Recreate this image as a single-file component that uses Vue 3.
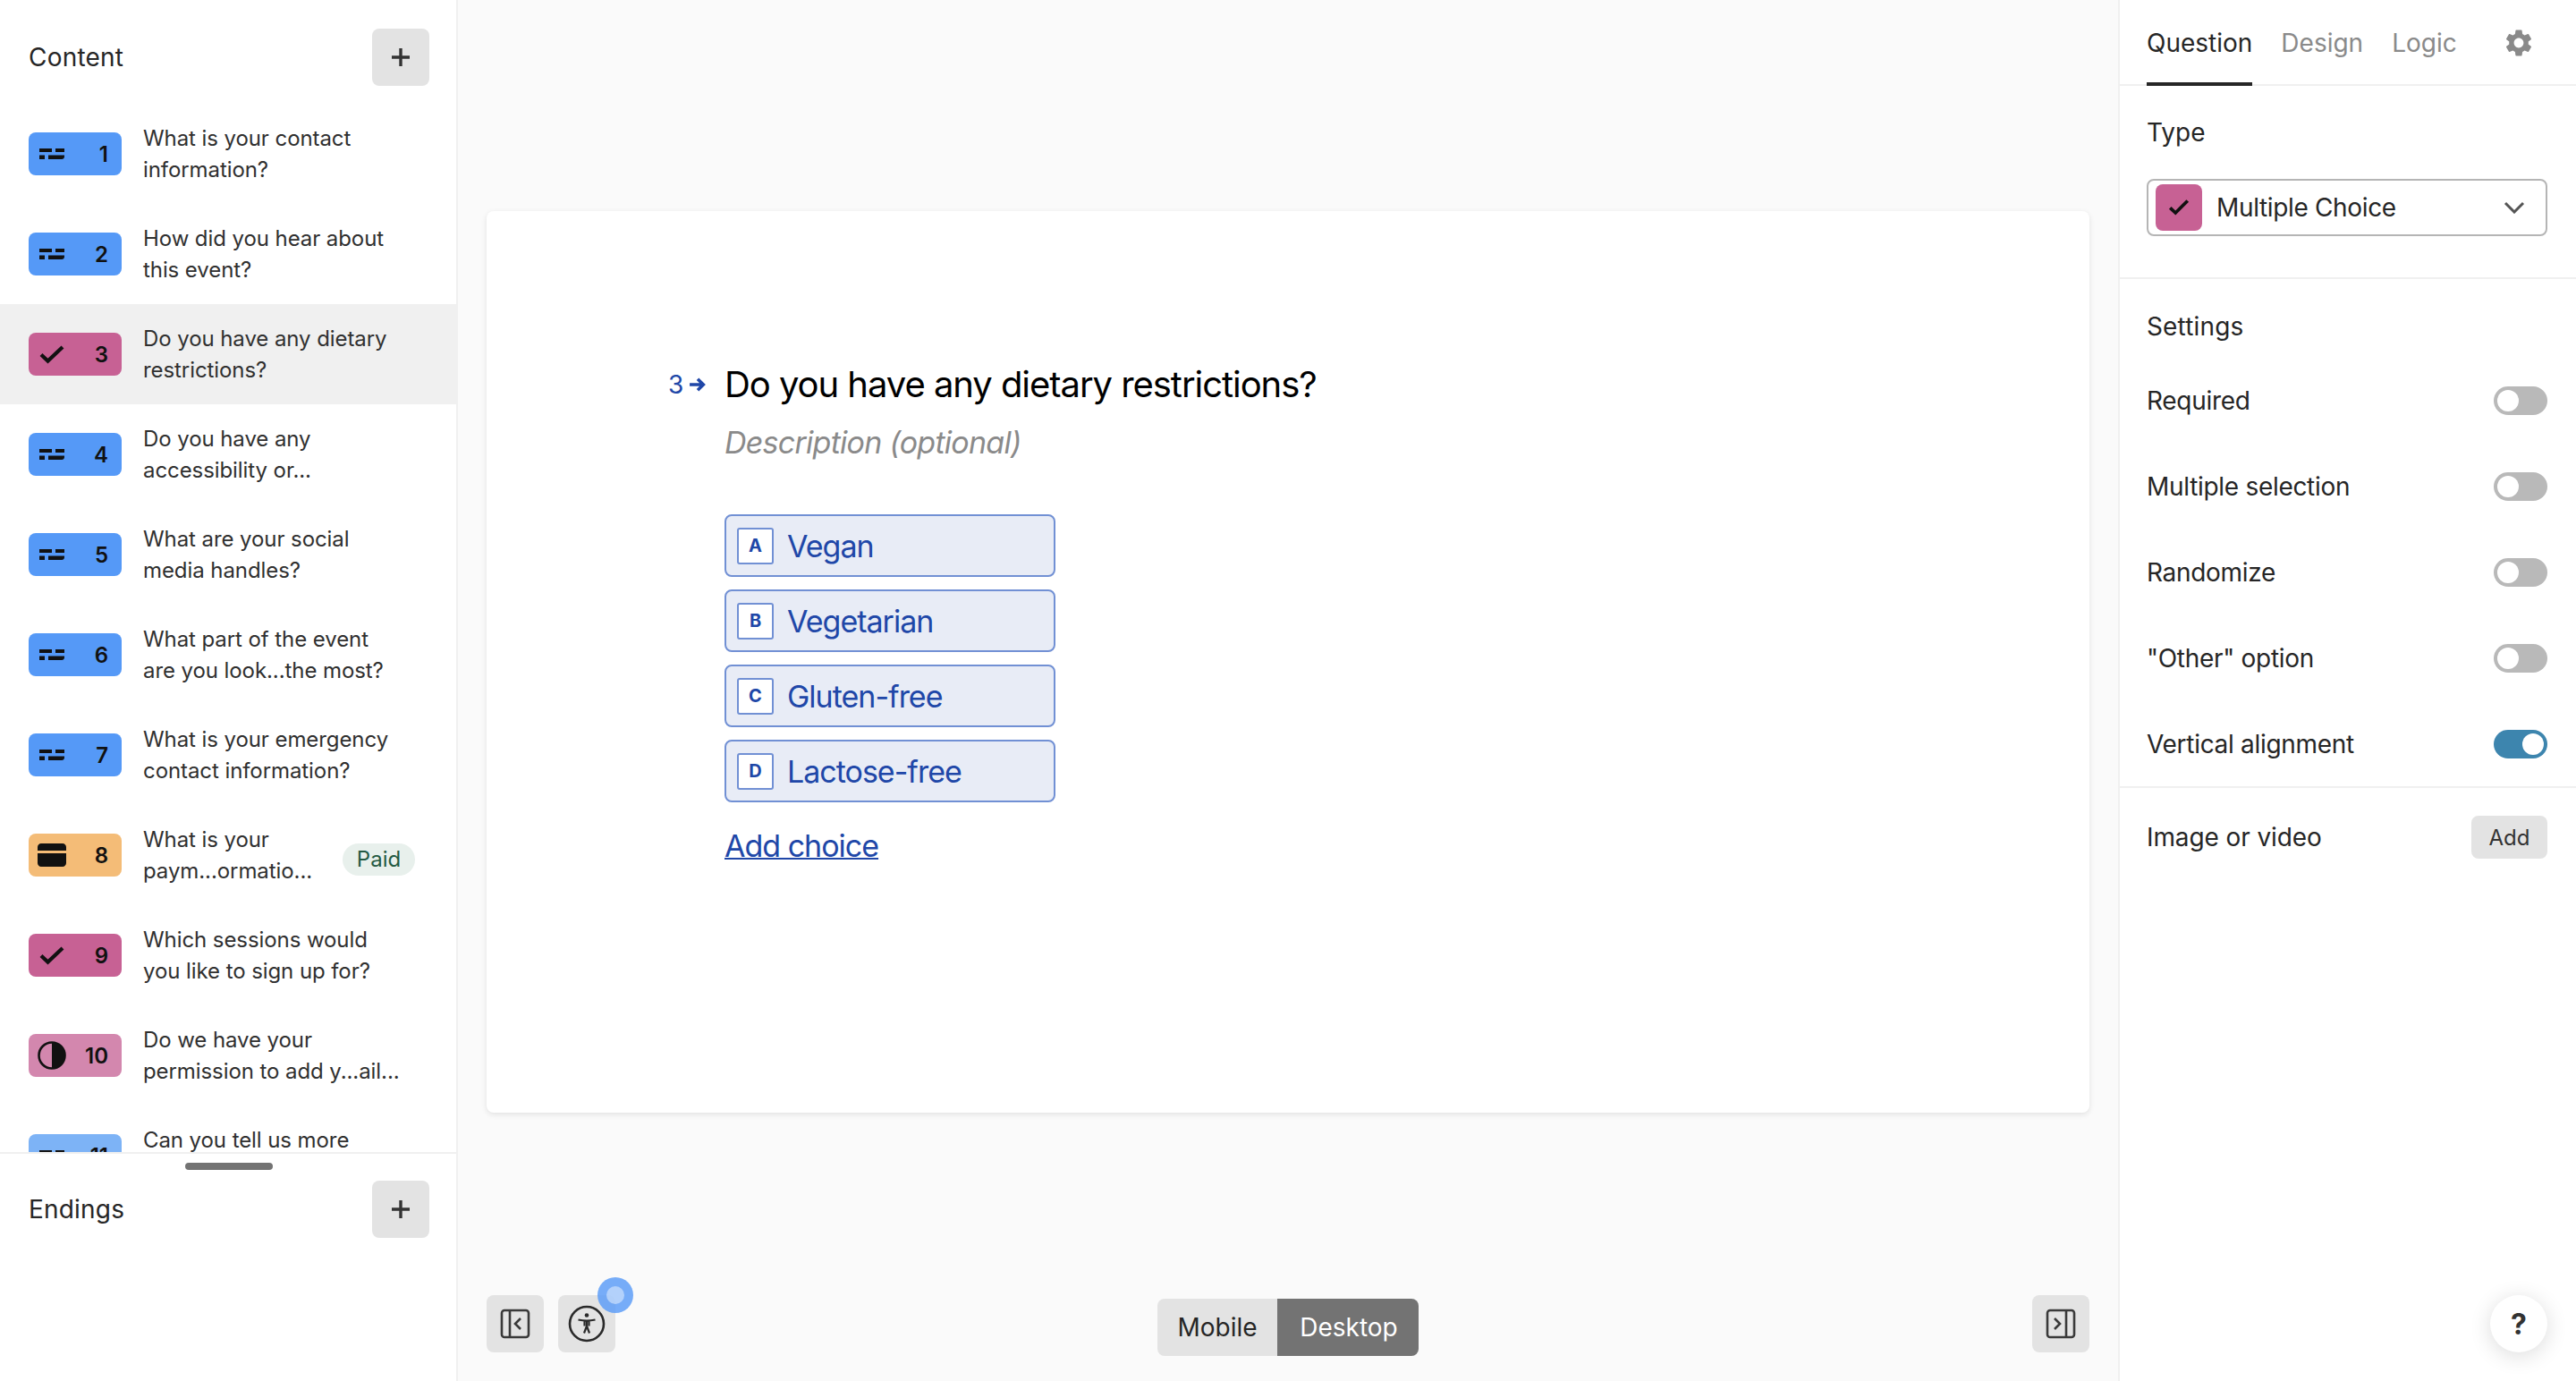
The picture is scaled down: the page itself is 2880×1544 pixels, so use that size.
<script setup>
const questions = [
  { n: 1, kind: 'short', color: '#5599f7', lines: ['What is your contact', 'information?'] },
  { n: 2, kind: 'short', color: '#5599f7', lines: ['How did you hear about', 'this event?'] },
  { n: 3, kind: 'check', color: '#c76194', lines: ['Do you have any dietary', 'restrictions?'], active: true },
  { n: 4, kind: 'short', color: '#5599f7', lines: ['Do you have any', 'accessibility or...'] },
  { n: 5, kind: 'short', color: '#5599f7', lines: ['What are your social', 'media handles?'] },
  { n: 6, kind: 'short', color: '#5599f7', lines: ['What part of the event', 'are you look...the most?'] },
  { n: 7, kind: 'short', color: '#5599f7', lines: ['What is your emergency', 'contact information?'] },
  { n: 8, kind: 'card', color: '#f4bc77', lines: ['What is your', 'paym...ormatio...'], paid: true },
  { n: 9, kind: 'check', color: '#c76194', lines: ['Which sessions would', 'you like to sign up for?'] },
  { n: 10, kind: 'half', color: '#d387ae', lines: ['Do we have your', 'permission to add y...ail...'] },
  { n: 11, kind: 'short', color: '#7db3f6', lines: ['Can you tell us more', 'about any...'] },
]
const choices = [
  { k: 'A', t: 'Vegan' },
  { k: 'B', t: 'Vegetarian' },
  { k: 'C', t: 'Gluten-free' },
  { k: 'D', t: 'Lactose-free' },
]
const settings = [
  { t: 'Required', on: false },
  { t: 'Multiple selection', on: false },
  { t: 'Randomize', on: false },
  { t: '"Other" option', on: false },
  { t: 'Vertical alignment', on: true },
]
</script>

<template>
  <div class="app">
    <aside class="left">
      <div class="head">
        <span class="head-title">Content</span>
        <button class="square">
          <svg width="20" height="20" viewBox="0 0 20 20"><path d="M10 0v20M0 10h20" stroke="#333" stroke-width="3.4" fill="none"/></svg>
        </button>
      </div>
      <div class="list">
        <div v-for="q in questions" :key="q.n" class="item" :class="{ active: q.active }">
          <div class="badge" :style="{ background: q.color }">
            <svg v-if="q.kind === 'short'" class="bi" width="32" height="32" viewBox="0 0 32 32">
              <path fill="#111" d="M2 10h14v4H2zM20 10h10v4H20zM2 17.500h6v4.500H2zM12 17.500h18v1.500c0 1.700-1.300 3-3 3H12z"/>
            </svg>
            <svg v-else-if="q.kind === 'check'" class="bi" width="32" height="32" viewBox="0 0 32 32">
              <path fill="none" stroke="#111" stroke-width="4.200" d="M4 16.500l7.500 7L28 8"/>
            </svg>
            <svg v-else-if="q.kind === 'card'" class="bi" width="32" height="32" viewBox="0 0 32 32">
              <path fill="#111" d="M0 7c0-2.200 1.800-4 4-4h24c2.200 0 4 1.800 4 4v4H0zM0 14h32v11c0 2.200-1.800 4-4 4H4c-2.200 0-4-1.800-4-4z"/>
            </svg>
            <svg v-else class="bi" width="32" height="32" viewBox="0 0 32 32">
              <circle cx="16" cy="16" r="14.500" fill="none" stroke="#111" stroke-width="2.600"/>
              <path fill="#111" d="M16 1.500a14.500 14.500 0 0 1 0 29z"/>
            </svg>
            <span class="num">{{ q.n }}</span>
          </div>
          <div class="qtext"><span v-for="l in q.lines" :key="l">{{ l }}</span></div>
          <span v-if="q.paid" class="paid">Paid</span>
        </div>
      </div>
      <div class="thumbtrack"><div class="thumb"></div></div>
      <div class="head endings">
        <span class="head-title">Endings</span>
        <button class="square">
          <svg width="20" height="20" viewBox="0 0 20 20"><path d="M10 0v20M0 10h20" stroke="#333" stroke-width="3.4" fill="none"/></svg>
        </button>
      </div>
    </aside>

    <main class="center">
      <section class="card">
        <div class="question">
          <div class="qnum">
            <span>3</span>
            <svg width="19" height="18" viewBox="0 0 18 16"><path d="M1 8h14M9.500 2l6 6-6 6" fill="none" stroke="#2047a8" stroke-width="3.400"/></svg>
          </div>
          <div class="qbody">
            <h1 class="qtitle">Do you have any dietary restrictions?</h1>
            <p class="qdesc">Description (optional)</p>
            <div class="choices">
              <div v-for="c in choices" :key="c.k" class="choice">
                <span class="key">{{ c.k }}</span>
                <span class="ctext">{{ c.t }}</span>
              </div>
            </div>
            <a class="addchoice">Add choice</a>
          </div>
        </div>
      </section>
      <div class="bottom">
        <div class="bleft">
          <button class="square">
            <svg width="34" height="34" viewBox="0 0 34 34" fill="none" stroke="#3a3a3a" stroke-width="2.600">
              <rect x="2" y="2" width="30" height="30" rx="3"/><path d="M11 2v30M23 11l-6 6 6 6"/>
            </svg>
          </button>
          <div class="a11y-wrap">
            <button class="square">
              <svg width="42" height="42" viewBox="0 0 42 42">
                <circle cx="21" cy="21" r="19" fill="none" stroke="#2a2a2a" stroke-width="2.600"/>
                <circle cx="21" cy="11.500" r="2.300" fill="#2a2a2a"/>
                <path d="M11.500 16.500c6 1.300 13 1.300 19 0M21 17.500v7M21 23.500l-3 8M21 23.500l3 8M18.500 17.500l0 6M23.500 17.500l0 6" fill="none" stroke="#2a2a2a" stroke-width="2.200"/>
              </svg>
            </button>
            <span class="pulse"><span class="pulse-in"></span></span>
          </div>
        </div>
        <div class="segment">
          <span class="seg">Mobile</span>
          <span class="seg on">Desktop</span>
        </div>
        <div class="bright">
          <button class="square">
            <svg width="34" height="34" viewBox="0 0 34 34" fill="none" stroke="#3a3a3a" stroke-width="2.600">
              <rect x="2" y="2" width="30" height="30" rx="3"/><path d="M23 2v30M10 11l6 6-6 6"/>
            </svg>
          </button>
        </div>
      </div>
    </main>

    <aside class="right">
      <nav class="tabs">
        <span class="tab on">Question</span>
        <span class="tab">Design</span>
        <span class="tab">Logic</span>
        <svg class="gear" width="30" height="30" viewBox="2 2 20 20">
          <path fill="#8a8a8a" d="M19.140 12.940c.04-.3.06-.61.06-.94 0-.32-.02-.64-.07-.94l2.030-1.580c.18-.14.23-.41.12-.61l-1.920-3.320c-.12-.22-.37-.29-.59-.22l-2.390.96c-.5-.38-1.030-.7-1.620-.94l-.36-2.540c-.04-.24-.24-.41-.48-.41h-3.840c-.24 0-.43.17-.47.41l-.36 2.540c-.59.24-1.130.57-1.620.94l-2.390-.96c-.22-.08-.47 0-.59.22L2.740 8.870c-.12.21-.08.47.12.61l2.030 1.580c-.05.3-.09.63-.09.94s.02.64.07.94l-2.030 1.580c-.18.14-.23.41-.12.61l1.920 3.320c.12.22.37.29.59.22l2.390-.96c.5.38 1.030.7 1.620.94l.36 2.540c.05.24.24.41.48.41h3.840c.24 0 .44-.17.47-.41l.36-2.540c.59-.24 1.130-.56 1.620-.94l2.390.96c.22.08.47 0 .59-.22l1.920-3.320c.12-.22.07-.47-.12-.61l-2.010-1.580zM12 15.600c-1.980 0-3.600-1.620-3.600-3.600s1.620-3.600 3.600-3.600 3.600 1.620 3.600 3.600-1.620 3.600-3.600 3.600z"/>
        </svg>
      </nav>
      <section class="typesec">
        <div class="label">Type</div>
        <div class="select">
          <span class="sicon">
            <svg width="28" height="24" viewBox="0 0 32 32"><path fill="none" stroke="#111" stroke-width="5" d="M3 16.500l8 7.500L29 6"/></svg>
          </span>
          <span class="stext">Multiple Choice</span>
          <svg class="chev" width="24" height="14" viewBox="0 0 24 14"><path d="M2 2l10 10L22 2" fill="none" stroke="#555" stroke-width="3"/></svg>
        </div>
      </section>
      <section class="setsec">
        <div class="label settings-label">Settings</div>
        <div v-for="s in settings" :key="s.t" class="row">
          <span class="rowlabel">{{ s.t }}</span>
          <span class="toggle" :class="{ on: s.on }"><span class="knob"></span></span>
        </div>
      </section>
      <section class="media">
        <span class="rowlabel media-label">Image or video</span>
        <button class="addbtn">Add</button>
      </section>
      <button class="help">?</button>
    </aside>
  </div>
</template>

<style scoped>
.app {
  display: flex;
  width: 2880px;
  height: 1544px;
  overflow: hidden;
  background: #fff;
  color: #262626;
  font-family: Inter, "Noto Sans", sans-serif;
}
button {
  font-family: inherit;
  border: 0;
  padding: 0;
}
.left {
  width: 512px;
  flex: none;
  display: flex;
  flex-direction: column;
  border-right: 2px solid #f0f0f0;
  box-sizing: border-box;
}
.head {
  height: 116px;
  flex: none;
  display: flex;
  align-items: flex-start;
  justify-content: space-between;
  padding: 32px 30px 0 32px;
  box-sizing: border-box;
}
.head-title {
  font-size: 28px;
  line-height: 64px;
  letter-spacing: 0.2px;
}
.square {
  width: 64px;
  height: 64px;
  border-radius: 8px;
  background: #e3e3e3;
  display: flex;
  align-items: center;
  justify-content: center;
}
.list {
  height: 1172px;
  flex: none;
  overflow: hidden;
  border-bottom: 2px solid #f0f0f0;
  box-sizing: content-box;
}
.item {
  height: 112px;
  display: flex;
  align-items: center;
  padding: 0 14px 0 32px;
  box-sizing: border-box;
}
.item.active {
  background: #f0f0f0;
}
.badge {
  width: 104px;
  height: 48px;
  flex: none;
  border-radius: 8px;
  display: flex;
  align-items: center;
  justify-content: space-between;
  padding: 0 15px 0 10px;
  box-sizing: border-box;
}
.num {
  font-size: 24px;
  font-weight: 600;
  color: #111;
}
.qtext {
  margin-left: 24px;
  font-size: 24px;
  line-height: 35.500px;
  letter-spacing: -0.08px;
  flex: 1;
  white-space: nowrap;
  color: #303030;
}
.qtext span {
  display: block;
}
.paid {
  flex: none;
  width: 81px;
  height: 36px;
  border-radius: 18px;
  background: #e8f0ec;
  color: #245a43;
  font-size: 24px;
  line-height: 36px;
  text-align: center;
  margin: 9px 32px 0 0;
}
.thumbtrack {
  height: 30px;
  flex: none;
  padding-top: 10px;
  box-sizing: border-box;
}
.thumb {
  width: 98px;
  height: 8px;
  margin-left: 207px;
  border-radius: 4px;
  background: #737373;
}
.endings {
  height: auto;
  padding-top: 0;
}
.center {
  flex: 1;
  min-width: 0;
  background: #fafafa;
  display: flex;
  flex-direction: column;
  padding: 236px 32px 28px;
  box-sizing: border-box;
}
.card {
  height: 1008px;
  flex: none;
  background: #fff;
  border-radius: 8px;
  box-shadow: 0 2px 6px rgba(0, 0, 0, 0.1);
  padding: 168px 0 0 203px;
  box-sizing: border-box;
}
.question {
  display: flex;
}
.qnum {
  width: 63px;
  flex: none;
  display: flex;
  gap: 6px;
  align-items: center;
  height: 52px;
  align-self: flex-start;
  color: #2047a8;
  font-size: 28px;
}
.qbody {
  flex: 1;
}
.qtitle {
  margin: 0;
  font-size: 40px;
  font-weight: 400;
  line-height: 52px;
  letter-spacing: -1.05px;
  color: #000;
}
.qdesc {
  margin: 14px 0 0;
  font-size: 34px;
  line-height: 50px;
  letter-spacing: -0.75px;
  font-style: italic;
  color: #8a8a8a;
}
.choices {
  margin-top: 55px;
  display: flex;
  flex-direction: column;
  gap: 14px;
}
.choice {
  width: 370px;
  height: 70px;
  box-sizing: border-box;
  border: 2px solid #7190d4;
  border-radius: 8px;
  background: #e8ecf6;
  display: flex;
  align-items: center;
  padding-left: 12px;
  color: #2047a8;
}
.key {
  width: 41px;
  height: 41px;
  box-sizing: border-box;
  border: 2px solid #7190d4;
  border-radius: 3px;
  background: #fff;
  display: flex;
  align-items: center;
  justify-content: center;
  font-size: 20px;
  font-weight: 700;
}
.ctext {
  margin-left: 15px;
  font-size: 34px;
  letter-spacing: -1px;
}
.addchoice {
  display: block;
  width: max-content;
  margin-top: 24px;
  font-size: 34px;
  line-height: 50px;
  letter-spacing: -1px;
  color: #2047a8;
  text-decoration: underline;
  text-decoration-thickness: 2px;
}
.bottom {
  margin-top: auto;
  display: grid;
  grid-template-columns: 1fr auto 1fr;
  align-items: start;
}
.bleft {
  display: flex;
  gap: 16px;
}
.a11y-wrap {
  position: relative;
}
.pulse {
  position: absolute;
  left: 44px;
  top: -20px;
  width: 40px;
  height: 40px;
  border-radius: 50%;
  background: rgba(85, 153, 247, 0.8);
  display: flex;
  align-items: center;
  justify-content: center;
}
.pulse-in {
  width: 20px;
  height: 20px;
  border-radius: 50%;
  background: rgba(255, 255, 255, 0.45);
}
.segment {
  display: flex;
  margin-top: 4px;
  height: 64px;
  border-radius: 8px;
  overflow: hidden;
  font-size: 28px;
  line-height: 64px;
}
.seg {
  background: #e3e3e3;
  width: 134px;
  text-align: center;
}
.seg.on {
  background: #737373;
  color: #fff;
  width: 158px;
  padding-left: 2px;
  box-sizing: border-box;
}
.bright {
  display: flex;
  justify-content: flex-end;
}
.right {
  width: 512px;
  flex: none;
  position: relative;
  border-left: 2px solid #f0f0f0;
  box-sizing: border-box;
}
.tabs {
  height: 96px;
  box-sizing: border-box;
  border-bottom: 2px solid #f0f0f0;
  display: flex;
  gap: 32px;
  padding-left: 30px;
  position: relative;
}
.tab {
  font-size: 28px;
  line-height: 97px;
  height: 96px;
  box-sizing: border-box;
  color: #8a8a8a;
}
.tab.on {
  color: #262626;
  border-bottom: 4px solid #262626;
}
.gear {
  position: absolute;
  left: 431px;
  top: 33px;
}
.typesec {
  height: 216px;
  box-sizing: border-box;
  border-bottom: 2px solid #f0f0f0;
  padding: 32px 32px 0 30px;
}
.label {
  font-size: 28px;
  line-height: 40px;
}
.select {
  margin-top: 32px;
  width: 448px;
  height: 64px;
  box-sizing: border-box;
  border: 2px solid #b5b5b5;
  border-radius: 8px;
  display: flex;
  align-items: center;
  padding: 0 23px 0 8px;
}
.sicon {
  width: 52px;
  height: 52px;
  border-radius: 8px;
  background: #c76194;
  display: flex;
  align-items: center;
  justify-content: center;
}
.stext {
  margin-left: 16px;
  font-size: 28px;
  letter-spacing: -0.35px;
  flex: 1;
}
.setsec {
  padding: 33px 32px 0 30px;
  height: 569px;
  box-sizing: border-box;
  border-bottom: 2px solid #f0f0f0;
}
.settings-label {
  margin-bottom: 15px;
  letter-spacing: 0.15px;
}
.row {
  height: 96px;
  display: flex;
  align-items: center;
  justify-content: space-between;
}
.rowlabel {
  font-size: 28px;
  letter-spacing: -0.3px;
}
.media-label {
  letter-spacing: -0.1px;
}
.toggle {
  width: 60px;
  height: 32px;
  border-radius: 16px;
  background: #b9b9b9;
  padding: 4px;
  box-sizing: border-box;
  display: flex;
}
.toggle.on {
  background: #3d85ae;
  justify-content: flex-end;
}
.knob {
  width: 24px;
  height: 24px;
  border-radius: 50%;
  background: #fff;
}
.media {
  display: flex;
  align-items: center;
  justify-content: space-between;
  padding: 31px 32px 0 30px;
}
.addbtn {
  width: 85px;
  height: 48px;
  border-radius: 8px;
  background: #e3e3e3;
  font-size: 24px;
  color: #333;
}
.help {
  position: absolute;
  left: 414px;
  top: 1448px;
  width: 64px;
  height: 64px;
  border-radius: 50%;
  background: #fff;
  box-shadow: 0 4px 24px rgba(0, 0, 0, 0.14);
  font-size: 32px;
  font-weight: 700;
  color: #333;
}
</style>

<style>
html, body {
  margin: 0;
  padding: 0;
  background: #fff;
}
</style>
